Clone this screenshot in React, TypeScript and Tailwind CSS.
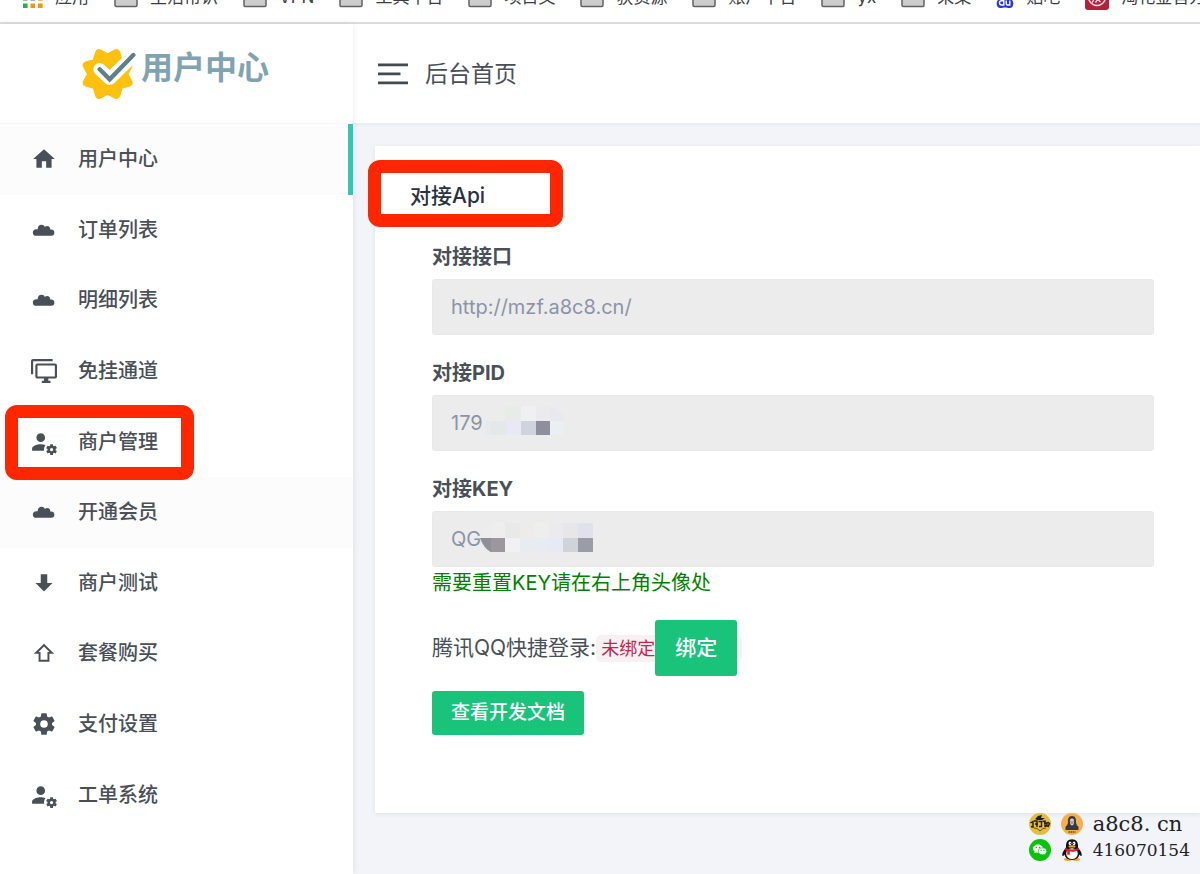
import React from "react";

type IconProps = { d: string };

function MenuIcon({ d }: IconProps) {
  return (
    <svg viewBox="0 0 24 24" className="size-[26px] shrink-0 fill-current" aria-hidden="true">
      <path d={d} />
    </svg>
  );
}

const HOME = "M10,20V14H14V20H19V12H22L12,3L2,12H5V20H10Z";
const CLOUD =
  "M4.8,17.4A3.100,3.100 0 0,1 1.700,14.300C1.700,12.600 3,11.300 4.900,11.200C5.400,11.200 5.900,11.300 6.200,11.400C6,9 7.500,7.200 9.700,7.200C11.200,7.200 12.300,8 12.800,9.200C13.400,8.500 14.100,8.200 14.900,8.200C16.700,8.200 18,9.600 17.700,11.500H18.500A2.950,2.950 0 0,1 18.700,17.400Z";
const MONITORS =
  "M22,17V7H6V17H22M22,5A2,2 0 0,1 24,7V17C24,18.11 23.1,19 22,19H16V21H18V23H10V21H12V19H6C4.89,19 4,18.11 4,17V7A2,2 0 0,1 6,5H22M2,3V15H0V3A2,2 0 0,1 2,1H20V3H2Z";
const ACCOUNT_COG =
  "M9,4A4,4 0 0,0 5,8A4,4 0 0,0 9,12A4,4 0 0,0 13,8A4,4 0 0,0 9,4M9,14C6.33,14 1,15.33 1,18V20H12.08C12.03,19.67 12,19.34 12,19C12,17.5 12.5,16 13.41,14.8C11.88,14.28 10.18,14 9,14M18,14C17.87,14 17.76,14.09 17.74,14.21L17.55,15.53C17.25,15.66 16.96,15.82 16.7,16L15.46,15.5C15.35,15.5 15.22,15.5 15.15,15.63L14.15,17.36C14.09,17.47 14.11,17.6 14.21,17.68L15.27,18.5C15.25,18.67 15.24,18.83 15.24,19C15.24,19.17 15.25,19.33 15.27,19.5L14.21,20.32C14.12,20.4 14.09,20.53 14.15,20.64L15.15,22.37C15.21,22.5 15.34,22.5 15.46,22.5L16.7,22C16.96,22.18 17.24,22.35 17.55,22.47L17.74,23.79C17.76,23.91 17.86,24 18,24H20C20.11,24 20.22,23.91 20.24,23.79L20.43,22.47C20.73,22.34 21,22.18 21.27,22L22.5,22.5C22.63,22.5 22.76,22.5 22.83,22.37L23.83,20.64C23.89,20.53 23.86,20.4 23.77,20.32L22.7,19.5C22.72,19.33 22.74,19.17 22.74,19C22.74,18.83 22.73,18.67 22.7,18.5L23.76,17.68C23.85,17.6 23.88,17.47 23.82,17.36L22.82,15.63C22.76,15.5 22.63,15.5 22.5,15.5L21.27,16C21,15.82 20.73,15.65 20.42,15.53L20.23,14.21C20.22,14.09 20.11,14 20,14M19,17.5A1.5,1.5 0 0,1 20.5,19A1.5,1.5 0 0,1 19,20.5C18.16,20.5 17.5,19.83 17.5,19A1.5,1.5 0 0,1 19,17.5Z";
const ARROW_DOWN = "M9,4H15V12H19.84L12,19.84L4.16,12H9V4Z";
const ARROW_UP =
  "M12,3.4L21.400,12.800H17V20H7V12.800H2.600L12,3.400M12,6L7,11H8.800V18.200H15.200V11H17L12,6Z";
const COG =
  "M12,15.5A3.5,3.5 0 0,1 8.5,12A3.5,3.5 0 0,1 12,8.5A3.5,3.5 0 0,1 15.5,12A3.5,3.5 0 0,1 12,15.5M19.43,12.97C19.47,12.65 19.5,12.33 19.5,12C19.5,11.67 19.47,11.34 19.43,11L21.54,9.37C21.73,9.22 21.78,8.95 21.66,8.73L19.66,5.27C19.54,5.05 19.27,4.96 19.05,5.05L16.56,6.05C16.04,5.66 15.5,5.32 14.87,5.07L14.5,2.42C14.46,2.18 14.25,2 14,2H10C9.75,2 9.54,2.18 9.5,2.42L9.13,5.07C8.5,5.32 7.96,5.66 7.44,6.05L4.95,5.05C4.73,4.96 4.46,5.05 4.34,5.27L2.34,8.73C2.21,8.95 2.27,9.22 2.46,9.37L4.57,11C4.53,11.34 4.5,11.67 4.5,12C4.5,12.33 4.53,12.65 4.57,12.97L2.46,14.63C2.27,14.78 2.21,15.05 2.34,15.27L4.34,18.73C4.46,18.95 4.73,19.03 4.95,18.95L7.44,17.94C7.96,18.34 8.5,18.68 9.13,18.93L9.5,21.58C9.54,21.82 9.75,22 10,22H14C14.25,22 14.46,21.82 14.5,21.58L14.87,18.93C15.5,18.67 16.04,18.34 16.56,17.94L19.05,18.95C19.27,19.03 19.54,18.95 19.66,18.73L21.66,15.27C21.78,15.05 21.73,14.78 21.54,14.63L19.43,12.97Z";

type MenuEntry = { label: string; icon: string; active?: boolean; shaded?: boolean; marked?: boolean };

const MENU: MenuEntry[] = [
  { label: "用户中心", icon: HOME, active: true, shaded: true },
  { label: "订单列表", icon: CLOUD },
  { label: "明细列表", icon: CLOUD },
  { label: "免挂通道", icon: MONITORS },
  { label: "商户管理", icon: ACCOUNT_COG, marked: true },
  { label: "开通会员", icon: CLOUD, shaded: true },
  { label: "商户测试", icon: ARROW_DOWN },
  { label: "套餐购买", icon: ARROW_UP },
  { label: "支付设置", icon: COG },
  { label: "工单系统", icon: ACCOUNT_COG },
];

function FolderIcon() {
  return (
    <svg viewBox="0 0 24 20" className="h-5 w-6 shrink-0" aria-hidden="true">
      <path
        d="M1 3.5A2 2 0 0 1 3 1.5H8.5L11 4H21A2 2 0 0 1 23 6V17.3A1.2 1.2 0 0 1 21.800 18.500H2.200A1.200 1.200 0 0 1 1 17.300Z"
        fill="#cdcdcd"
        stroke="#626262"
        strokeWidth="1.500"
      />
    </svg>
  );
}

function AppsIcon() {
  const dots = ["#ea4335", "#ea4335", "#ea4335", "#34a853", "#4285f4", "#f29900", "#34a853", "#f29900", "#f29900"];
  return (
    <svg viewBox="0 0 20 20" className="size-5 shrink-0" aria-hidden="true">
      {dots.map((c, i) => (
        <rect key={i} x={(i % 3) * 7.500} y={Math.floor(i / 3) * 7.500 + 0.500} width="4.600" height="4.600" fill={c} />
      ))}
    </svg>
  );
}

function PawIcon() {
  return (
    <svg viewBox="0 0 18 20" className="h-5 w-[18px] shrink-0" aria-hidden="true">
      <g fill="#2534e0">
        <ellipse cx="6" cy="3.500" rx="2" ry="3" />
        <ellipse cx="12" cy="3.500" rx="2" ry="3" />
        <path d="M9 7C5.500 7 4.500 10 2.500 11.500C-.5 14 .2 20 4.500 20C6.500 20 7 19.500 9 19.500S11.500 20 13.500 20C17.800 20 18.500 14 15.500 11.500C13.500 10 12.500 7 9 7Z" />
      </g>
      <g fill="none" stroke="#fff" strokeWidth="1.400">
        <path d="M7.800 9.500V17H5.600A2 2 0 0 1 5.600 12.700H7.800" />
        <path d="M10.200 12.500V15.500C10.200 16.500 10.800 17 11.600 17H13.800V12.500" />
      </g>
    </svg>
  );
}

function SealIcon() {
  return (
    <svg viewBox="0 0 24 24" className="size-6 shrink-0" aria-hidden="true">
      <rect width="24" height="24" rx="3" fill="#b5213d" />
      <circle cx="12" cy="11" r="8.500" fill="none" stroke="#f4dcdf" strokeWidth="1.500" />
      <path d="M8.500 7V13C8.500 15 7.500 16 7 16.500M15.500 9.500L10.500 16.500M11 12L15.500 16" fill="none" stroke="#f4dcdf" strokeWidth="1.400" />
    </svg>
  );
}

const BOOKMARKS: { label: string; icon: React.ReactNode }[] = [
  { label: "应用", icon: <AppsIcon /> },
  { label: "生活常识", icon: <FolderIcon /> },
  { label: "VPN", icon: <FolderIcon /> },
  { label: "工具平台", icon: <FolderIcon /> },
  { label: "项目文", icon: <FolderIcon /> },
  { label: "获资源", icon: <FolderIcon /> },
  { label: "账户平台", icon: <FolderIcon /> },
  { label: "yx", icon: <FolderIcon /> },
  { label: "采集", icon: <FolderIcon /> },
  { label: "贴吧", icon: <PawIcon /> },
  { label: "淘花金官方", icon: <SealIcon /> },
];

const STAR_POINTS = Array.from({ length: 16 }, (_, i) => {
  const r = i % 2 === 0 ? 49 : 68;
  const a = (i * Math.PI) / 8;
  return `${(77 + r * Math.cos(a)).toFixed(1)},${(78 + r * Math.sin(a)).toFixed(1)}`;
}).join(" ");

function Logo() {
  return (
    <svg viewBox="0 0 162 156" className="h-[52px] w-[54px] shrink-0" aria-hidden="true">
      <polygon points={STAR_POINTS} fill="#ffc10e" stroke="#ffc10e" strokeWidth="24" strokeLinejoin="round" />
      <path d="M53 64L83 92L156 21" fill="none" stroke="#fff" strokeWidth="38" strokeLinecap="round" strokeLinejoin="round" />
      <path d="M53 64L83 94L154 21" fill="none" stroke="#5f7f8d" strokeWidth="13" strokeLinecap="round" strokeLinejoin="miter" />
    </svg>
  );
}

type Cell = [number, number, number, number, string];

const PID_CELLS: Cell[] = [
  [21, 0, 15, 15, "#e9ebe8"],
  [36, 0, 15, 15, "#f0f0f2"],
  [51, 0, 14, 15, "#ebebee"],
  [0, 15, 6, 14, "#e6e9f0"],
  [6, 15, 15, 14, "#e4e8e9"],
  [21, 15, 15, 14, "#e9e9f6"],
  [36, 15, 15, 14, "#d0d3dd"],
  [51, 15, 14, 14, "#8e8e9c"],
];

const KEY_CELLS: Cell[] = [
  [10, 0, 15, 15, "#eeeeef"],
  [25, 0, 15, 15, "#e9e9ea"],
  [40, 0, 14, 15, "#edecea"],
  [54, 0, 15, 15, "#eeeeec"],
  [69, 0, 14, 15, "#ebebed"],
  [83, 0, 15, 15, "#e7e7e9"],
  [98, 0, 15, 15, "#e1e0ed"],
  [10, 15, 15, 14, "#9b979c"],
  [25, 15, 15, 14, "#f1f1f4"],
  [40, 15, 14, 14, "#e6ecf0"],
  [54, 15, 15, 14, "#e6ecf2"],
  [69, 15, 14, 14, "#e6eaf4"],
  [83, 15, 15, 14, "#cfd4d8"],
  [98, 15, 15, 14, "#9b9da6"],
];

function Cells({ cells }: { cells: Cell[] }) {
  return (
    <>
      {cells.map(([x, y, w, h, c]) => (
        <rect key={`${x}-${y}`} x={x} y={y} width={w} height={h} fill={c} />
      ))}
    </>
  );
}

function Field({ id, label, value, children }: { id: string; label: string; value: string; children?: React.ReactNode }) {
  return (
    <div>
      <label htmlFor={id} className="block text-[20px] leading-[30px] font-bold text-[#495057]">
        {label}
      </label>
      <div className="relative mt-[7px]">
        <input
          id={id}
          readOnly
          value={value}
          className="block h-14 w-full rounded-[3px] border border-[#e8e8e8] bg-[#ececec] px-[18px] text-[20px] text-[#8a94a8] outline-none"
        />
        {children}
      </div>
    </div>
  );
}

function Watermark() {
  return (
    <div className="absolute right-[10px] bottom-[11px] grid grid-cols-[22px_22px_auto] items-center gap-x-[10px] font-['DejaVu_Serif','Noto_Sans_CJK_SC',serif] text-[#222]">
      <svg viewBox="0 0 22 22" className="size-[22px]" aria-hidden="true">
        <circle cx="11" cy="11" r="11" fill="#e3bd3c" />
        <path d="M9 3L13 2L12 5L16 5L13 7H8L6 6Z" fill="#221b10" />
        <path d="M1.500 10L4 8.500V14L2 13.500M5 8H8V14M6 11H9M9.500 8.500H12.500V13.500H10M13.500 8.500L16 8V14M15 10H18V13H16M18.500 9L20.500 10.500L19 14" fill="none" stroke="#221b10" strokeWidth="1.400" />
        <path d="M5 15L8 15.500L11 18L14 15.500L17 15" fill="none" stroke="#6b541b" />
      </svg>
      <svg viewBox="0 0 22 22" className="size-[22px]" aria-hidden="true">
        <circle cx="11" cy="11" r="11" fill="#f5b04b" />
        <path d="M11 3C7.500 3 6.800 6 7 9C7 11 6 12.500 4.500 14V17H17.500V14C16 12.500 15 11 15 9C15.200 6 14.500 3 11 3Z" fill="#39393d" />
        <path d="M11 5.500C8.900 5.500 8.700 7.500 9 9.500C9.200 11.200 10 12.500 11 12.500S12.800 11.200 13 9.500C13.300 7.500 13.100 5.500 11 5.500Z" fill="#d7d3cb" />
        <path d="M9.300 8.300H10.500M11.500 8.300H12.700M9.800 10.300L11 9.700L12.200 10.300" fill="none" stroke="#39393d" strokeWidth=".7" />
        <path d="M7.500 19H14.500" stroke="#725129" strokeWidth="1.500" strokeDasharray="1.500 .5" />
      </svg>
      <span className="text-[21px] leading-[26px]">a8c8. cn</span>
      <svg viewBox="0 0 22 22" className="size-[22px]" aria-hidden="true">
        <circle cx="11" cy="11" r="11" fill="#08c406" />
        <path d="M9 5.500C6.200 5.500 4 7.300 4 9.600C4 10.900 4.700 12 5.800 12.800L5.400 14.300L7.200 13.400C7.800 13.600 8.400 13.700 9 13.700C11.800 13.700 14 11.900 14 9.600S11.800 5.500 9 5.500Z" fill="#fff" />
        <path d="M13.500 8.800C11 8.800 9.200 10.300 9.200 12.300S11 15.800 13.500 15.800C14.100 15.800 14.600 15.700 15.100 15.600L16.600 16.400L16.200 15C17.200 14.400 17.800 13.400 17.800 12.300C17.800 10.300 16 8.800 13.500 8.800Z" fill="#fff" stroke="#08c406" strokeWidth=".7" />
        <g fill="#08c406">
          <circle cx="7.400" cy="8.500" r=".7" />
          <circle cx="10.600" cy="8.500" r=".7" />
          <circle cx="12.200" cy="11.300" r=".6" />
          <circle cx="14.900" cy="11.300" r=".6" />
        </g>
      </svg>
      <svg viewBox="0 0 22 22" className="size-[22px]" aria-hidden="true">
        <ellipse cx="7" cy="20.300" rx="4" ry="1.600" fill="#f8a51b" />
        <ellipse cx="15" cy="20.300" rx="4" ry="1.600" fill="#f8a51b" />
        <path d="M11 .2C7 .2 5 3 5 6.300V8.500C3 11 .8 14 1.300 16.500C1.600 17.600 2.600 16.800 3.600 15.500C4.200 19 7 20.800 11 20.800S17.800 19 18.400 15.500C19.400 16.800 20.400 17.600 20.700 16.500C21.200 14 19 11 17 8.500V6.300C17 3 15 .2 11 .2Z" fill="#111" />
        <ellipse cx="11" cy="14.600" rx="5.800" ry="5.400" fill="#fff" />
        <ellipse cx="9" cy="4.300" rx="1.400" ry="1.900" fill="#fff" />
        <ellipse cx="13" cy="4.300" rx="1.400" ry="1.900" fill="#fff" />
        <circle cx="9.400" cy="4.500" r=".6" fill="#111" />
        <circle cx="12.600" cy="4.500" r=".6" fill="#111" />
        <ellipse cx="11" cy="7.400" rx="3.600" ry="1.200" fill="#f8a51b" />
        <path d="M4.300 8.800C8 11 14 11 17.700 8.800L18 11C14.500 12.700 11.500 13 8.800 12.600V15.800H6.200V11.900L4 11Z" fill="#e51c23" />
      </svg>
      <span className="text-[17px] leading-[26px]">416070154</span>
    </div>
  );
}

export default function App() {
  return (
    <div className="relative flex min-h-screen flex-col overflow-hidden bg-white font-[Inter,'Noto_Sans_CJK_SC',sans-serif] text-[#495057]">
      <nav
        aria-label="书签"
        className="flex h-6 items-end gap-[25px] overflow-hidden border-b-2 border-[#dedede] pb-[11px] pl-[23px] text-[17px] whitespace-nowrap text-[#3c4043]"
      >
        {BOOKMARKS.map((b) => (
          <a key={b.label} href="#" className="flex h-[26px] shrink-0 items-center gap-3">
            {b.icon}
            {b.label}
          </a>
        ))}
      </nav>

      <div className="flex flex-1">
        <aside className="z-10 w-[353px] shrink-0 bg-white shadow-[0_0_6px_rgba(60,70,110,0.12)]">
          <a href="#" className="flex h-[100px] items-center gap-[5px] border-b border-[#f6f6f8] pl-[82px]">
            <Logo />
            <span className="pb-3 text-[32px] leading-10 font-bold text-[#7fa3b3]">用户中心</span>
          </a>
          <nav aria-label="主菜单">
            <ul className="grid h-[706px] auto-rows-fr">
              {MENU.map((m) => (
                <li key={m.label} className={m.marked ? "relative z-10" : m.shaded ? "bg-[#fcfcfc]" : ""}>
                  <a
                    href="#"
                    aria-current={m.active ? "page" : undefined}
                    className={
                      m.active
                        ? "flex h-full items-center gap-[21px] border-r-[5px] border-[#33c7b5] pl-[31px] text-[20px] font-medium"
                        : "flex h-full items-center gap-[21px] pl-[31px] text-[20px] font-medium"
                    }
                  >
                    <MenuIcon d={m.icon} />
                    {m.label}
                  </a>
                  {m.marked && (
                    <span className="pointer-events-none absolute -top-px left-[5px] h-[75px] w-[189px] rounded-xl border-[13px] border-[#ff2600]" />
                  )}
                </li>
              ))}
            </ul>
          </nav>
        </aside>

        <div className="flex min-w-0 flex-1 flex-col bg-[#f3f4f9]">
          <header className="flex h-[99px] items-center gap-[17px] bg-white pl-[25px] shadow-[0_1px_4px_rgba(60,70,110,0.08)]">
            <button type="button" aria-label="菜单">
              <svg viewBox="0 0 30 22" className="h-[22px] w-[30px] fill-[#444a52]" aria-hidden="true">
                <path d="M0 .5H30V3.200H0ZM0 9.500H22.500V12.200H0ZM0 18.500H30V21.200H0Z" />
              </svg>
            </button>
            <h1 className="text-[23px] leading-8">后台首页</h1>
          </header>

          <main className="pt-[23px] pl-[22px]">
            <section className="bg-white pt-9 pb-[78px] shadow-[0_1px_4px_rgba(60,70,110,0.1)]">
              <div className="relative pl-[35px]">
                <h2 className="text-[21px] leading-7 font-medium text-[#2a3142]">对接Api</h2>
                <span className="pointer-events-none absolute -top-[22px] -left-[7px] h-[67px] w-[195px] rounded-xl border-[13px] border-[#ff2600]" />
              </div>
              <form className="mt-8 pr-[46px] pl-[57px]" onSubmit={(e) => e.preventDefault()}>
                <div className="flex flex-col gap-[23px]">
                  <Field id="api-url" label="对接接口" value="http://mzf.a8c8.cn/" />
                  <Field id="api-pid" label="对接PID" value="179">
                    <svg viewBox="0 0 80 29" className="absolute top-[11px] left-[53px] h-[29px] w-20" aria-hidden="true">
                      <Cells cells={PID_CELLS} />
                      <path d="M65 0C73 2 78 8 79 15H65Z" fill="#e8e8ee" />
                      <path d="M65 15H79V25Q79 29 75 29H65Z" fill="#ebeff3" />
                    </svg>
                  </Field>
                  <Field id="api-key" label="对接KEY" value="QG">
                    <svg viewBox="0 0 114 29" className="absolute top-3 left-12 h-[29px] w-[114px]" aria-hidden="true">
                      <Cells cells={KEY_CELLS} />
                      <path d="M0 15H11V29Q4 26 0 15Z" fill="#8e9096" />
                      <path d="M0 15Q3 3 11 0V15Z" fill="#ededee" />
                    </svg>
                  </Field>
                </div>
                <p className="mt-px text-[20px] leading-[30px] text-[#008000]">需要重置KEY请在右上角头像处</p>
                <div className="mt-[22px] flex h-14 items-center">
                  <span className="text-[21px] leading-[30px]">腾讯QQ快捷登录:</span>
                  <span className="flex h-[27px] items-center rounded-[5px] bg-[#f8f1f4] px-[5px] text-[18px] text-[#c7254e]">
                    未绑定
                    <button type="button" className="h-14 rounded-[3px] bg-[#19c37a] px-5 text-[21px] font-medium text-white">
                      绑定
                    </button>
                  </span>
                </div>
                <button type="button" className="mt-[15px] h-11 rounded-[3px] bg-[#19c37a] px-[19px] text-[19px] font-medium text-white">
                  查看开发文档
                </button>
              </form>
            </section>
          </main>
        </div>
      </div>
      <Watermark />
    </div>
  );
}
